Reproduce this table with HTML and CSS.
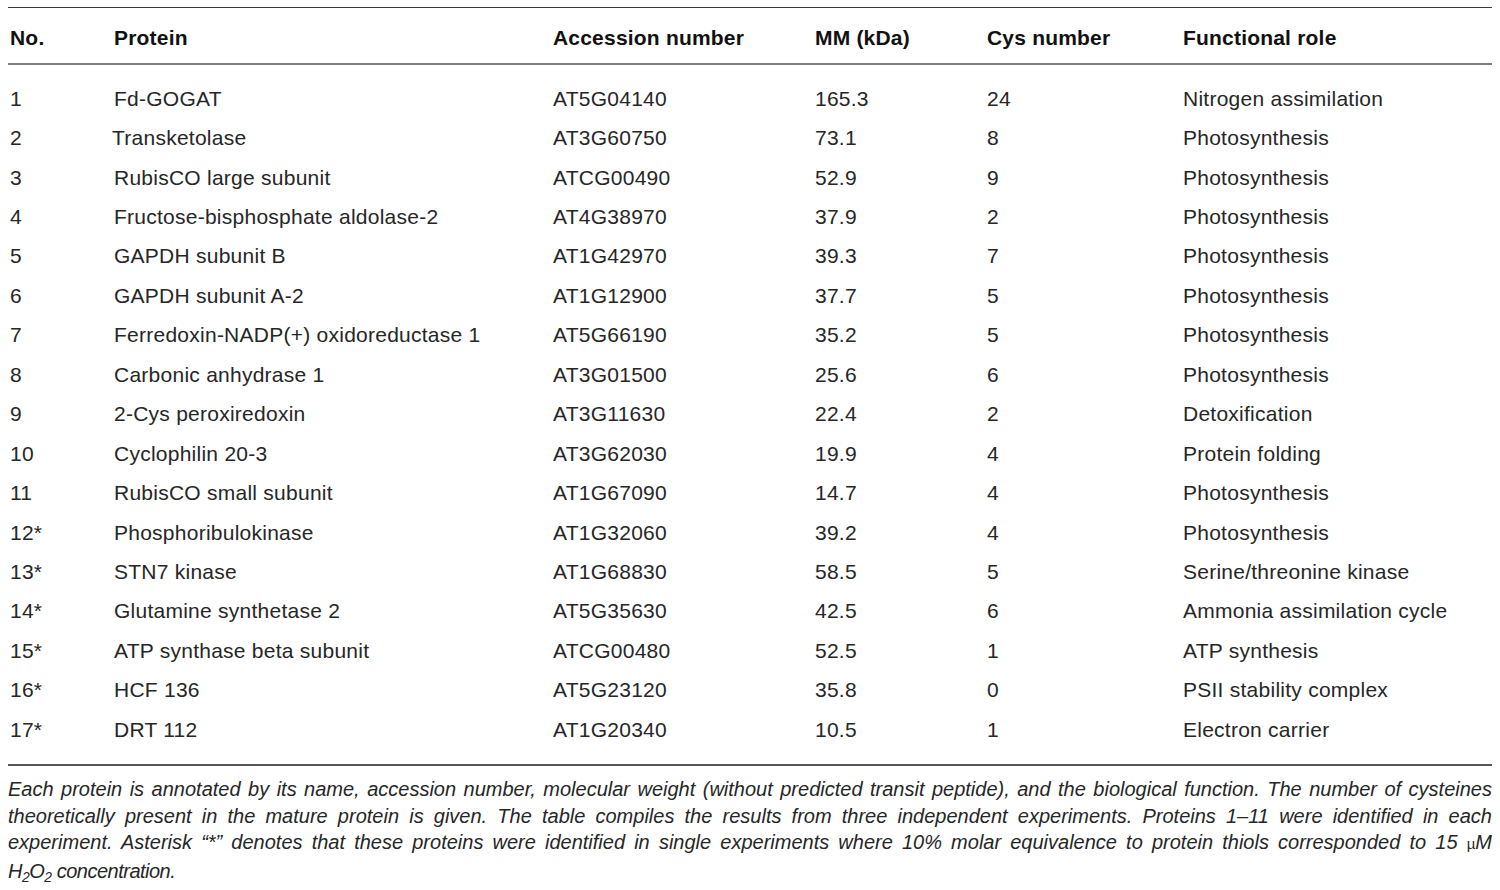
FILE: index.html
```html
<!DOCTYPE html>
<html>
<head>
<meta charset="utf-8">
<link rel="stylesheet" href="styles.css">
</head>
<body>
<div class="table">
  <div class="row head">
    <div>No.</div><div>Protein</div><div>Accession number</div><div>MM (kDa)</div><div>Cys number</div><div>Functional role</div>
  </div>
  <div class="body">
    <div class="row"><div>1</div><div>Fd-GOGAT</div><div>AT5G04140</div><div>165.3</div><div>24</div><div>Nitrogen assimilation</div></div>
    <div class="row"><div>2</div><div class="nudge">Transketolase</div><div>AT3G60750</div><div>73.1</div><div>8</div><div>Photosynthesis</div></div>
    <div class="row"><div>3</div><div>RubisCO large subunit</div><div>ATCG00490</div><div>52.9</div><div>9</div><div>Photosynthesis</div></div>
    <div class="row"><div>4</div><div>Fructose-bisphosphate aldolase-2</div><div>AT4G38970</div><div>37.9</div><div>2</div><div>Photosynthesis</div></div>
    <div class="row"><div>5</div><div>GAPDH subunit B</div><div>AT1G42970</div><div>39.3</div><div>7</div><div>Photosynthesis</div></div>
    <div class="row"><div>6</div><div>GAPDH subunit A-2</div><div>AT1G12900</div><div>37.7</div><div>5</div><div>Photosynthesis</div></div>
    <div class="row"><div>7</div><div>Ferredoxin-NADP(+) oxidoreductase 1</div><div>AT5G66190</div><div>35.2</div><div>5</div><div>Photosynthesis</div></div>
    <div class="row"><div>8</div><div>Carbonic anhydrase 1</div><div>AT3G01500</div><div>25.6</div><div>6</div><div>Photosynthesis</div></div>
    <div class="row"><div>9</div><div>2-Cys peroxiredoxin</div><div>AT3G11630</div><div>22.4</div><div>2</div><div>Detoxification</div></div>
    <div class="row"><div>10</div><div>Cyclophilin 20-3</div><div>AT3G62030</div><div>19.9</div><div>4</div><div>Protein folding</div></div>
    <div class="row"><div>11</div><div>RubisCO small subunit</div><div>AT1G67090</div><div>14.7</div><div>4</div><div>Photosynthesis</div></div>
    <div class="row"><div>12*</div><div>Phosphoribulokinase</div><div>AT1G32060</div><div>39.2</div><div>4</div><div>Photosynthesis</div></div>
    <div class="row"><div>13*</div><div>STN7 kinase</div><div>AT1G68830</div><div>58.5</div><div>5</div><div>Serine/threonine kinase</div></div>
    <div class="row"><div>14*</div><div>Glutamine synthetase 2</div><div>AT5G35630</div><div>42.5</div><div>6</div><div>Ammonia assimilation cycle</div></div>
    <div class="row"><div>15*</div><div>ATP synthase beta subunit</div><div>ATCG00480</div><div>52.5</div><div>1</div><div>ATP synthesis</div></div>
    <div class="row"><div>16*</div><div>HCF 136</div><div>AT5G23120</div><div>35.8</div><div>0</div><div>PSII stability complex</div></div>
    <div class="row"><div>17*</div><div>DRT 112</div><div>AT1G20340</div><div>10.5</div><div>1</div><div>Electron carrier</div></div>
  </div>
</div>
<p class="caption">
  <span class="line">Each protein is annotated by its name, accession number, molecular weight (without predicted transit peptide), and the biological function. The number of cysteines</span>
  <span class="line">theoretically present in the mature protein is given. The table compiles the results from three independent experiments. Proteins 1–11 were identified in each</span>
  <span class="line">experiment. Asterisk “*” denotes that these proteins were identified in single experiments where 10% molar equivalence to protein thiols corresponded to 15 <span class="mu">µ</span>M</span>
  <span class="line last">H<sub>2</sub>O<sub>2</sub> concentration.</span>
</p>
</body>
</html>
```

FILE: styles.css
```css
html, body {
  background: #ffffff;
}
body {
  margin: 7px 8px 0 8px;
  font-family: "Liberation Sans", Arial, sans-serif;
  color: #262626;
}
.table {
  width: 1484px;
  border-top: 1px solid #3a3a3a;
  border-bottom: 2px solid #555555;
}
.row {
  display: grid;
  grid-template-columns: 104px 439px 262px 172px 196px 1fr;
  padding-left: 2px;
  align-items: center;
}
.head {
  font-weight: bold;
  font-size: 21px;
  line-height: 24px;
  padding-top: 18px;
  padding-bottom: 13px;
  color: #111;
  letter-spacing: 0.2px;
  border-bottom: 2px solid #7d7d7d;
}
.body {
  padding: 14px 0 15px 0;
}
.body .row {
  height: 39.44px;
  font-size: 21px;
  line-height: 24px;
  letter-spacing: 0.25px;
}
.nudge {
  margin-left: -2px;
}
.caption {
  margin: 10px 0 0 0;
  width: 1484px;
  font-family: "Liberation Sans", Arial, sans-serif;
  font-style: italic;
  font-size: 20px;
  line-height: 26.4px;
  color: #262626;
}
.caption .line {
  display: block;
  white-space: nowrap;
  text-align: justify;
  text-align-last: justify;
}
.caption .line.last {
  text-align-last: left;
  letter-spacing: -0.5px;
}
.caption sub {
  font-size: 14px;
  line-height: 0;
  vertical-align: -4px;
}
.mu {
  font-style: normal;
  font-size: 15px;
}
```
